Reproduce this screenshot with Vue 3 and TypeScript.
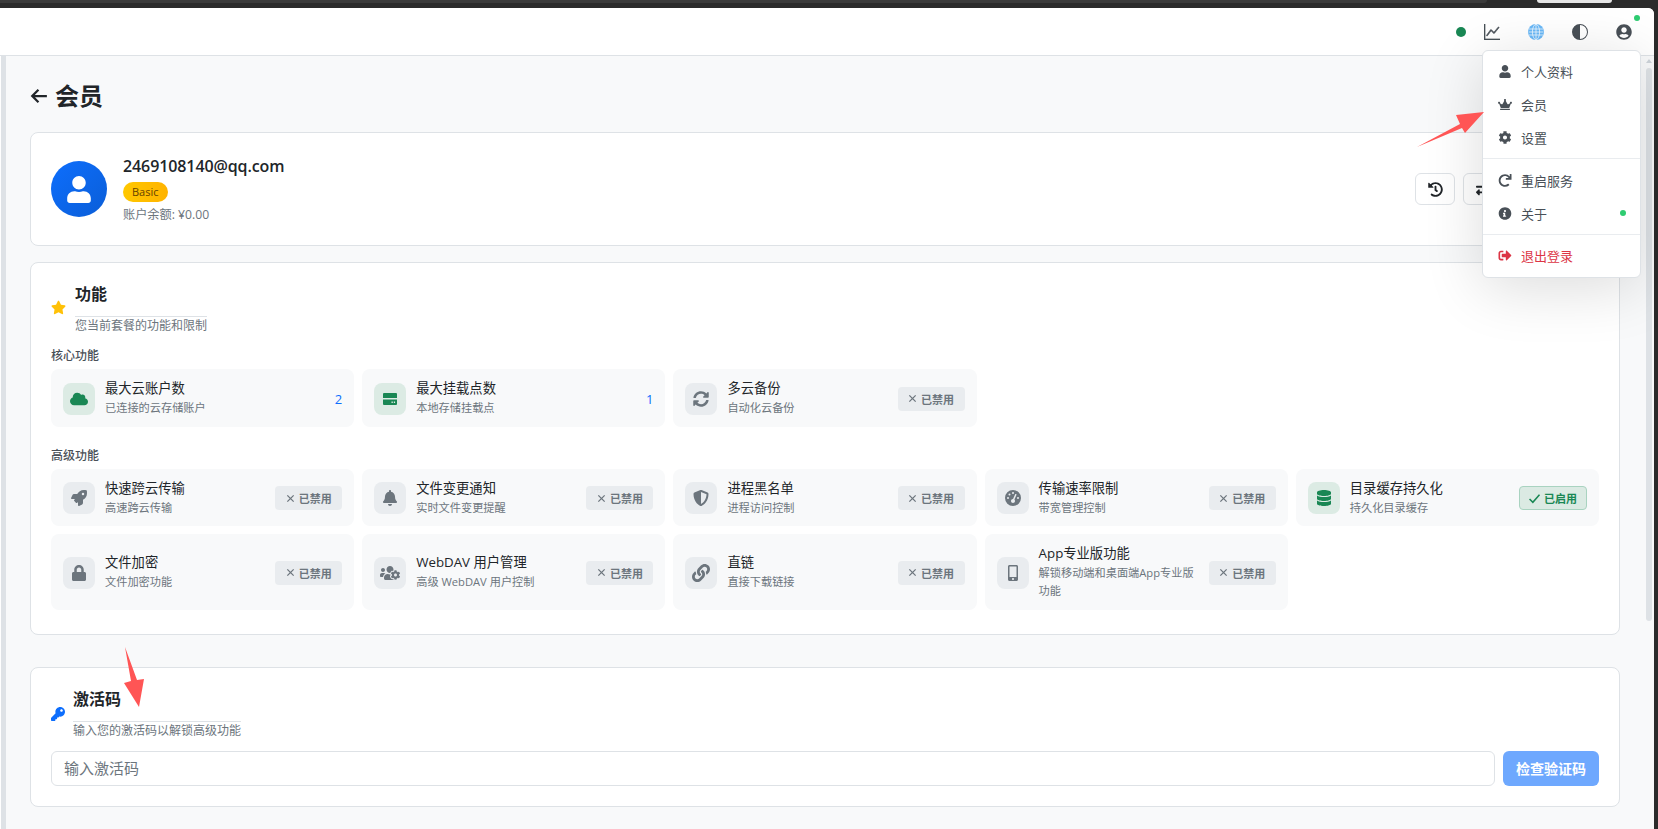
<template>
  <div class="screen">
    <div class="tab-strip">
      <div class="tab-rest"></div>
      <div class="tab-pill"></div>
    </div>

    <div class="window">
      <header class="topbar">
        <span class="status-dot"></span>
        <button class="top-btn">
          <svg :viewBox="icons.chart.vb" class="top-icon chart"><path :d="icons.chart.d" /></svg>
        </button>
        <button class="top-btn">
          <svg viewBox="0 0 16 16" class="top-icon">
            <circle cx="8" cy="8" r="8" fill="#69b8f7" />
            <g fill="none" stroke="#fff" stroke-width="0.7">
              <ellipse cx="8" cy="8" rx="3.6" ry="7.6" />
              <path d="M8 0v16M0.6 5h14.8M0.6 8h14.8M0.6 11h14.8" />
            </g>
          </svg>
        </button>
        <button class="top-btn">
          <svg :viewBox="icons.contrast.vb" class="top-icon"><path :d="icons.contrast.d" /></svg>
        </button>
        <button class="top-btn">
          <svg :viewBox="icons.userCircle.vb" class="top-icon"><path :d="icons.userCircle.d" /></svg>
          <span class="user-dot"></span>
        </button>
      </header>

      <div class="body">
        <div class="rail"></div>
        <main class="content">
          <h1 class="page-title">
            <svg viewBox="0 0 16 16" class="back-icon">
              <path d="M15 8H2M7.5 2.5 2 8l5.5 5.5" fill="none" stroke="currentColor" stroke-width="2" />
            </svg>
            会员
          </h1>

          <section class="card profile">
            <div class="avatar">
              <svg :viewBox="icons.user.vb" class="avatar-icon"><path :d="icons.user.d" /></svg>
            </div>
            <div class="profile-info">
              <div class="email">2469108140@qq.com</div>
              <span class="plan">Basic</span>
              <div class="balance">账户余额: ¥0.00</div>
            </div>
            <!-- the rest of this row sits under the open menu -->
            <div class="profile-actions">
              <button class="outline-btn">
                <svg :viewBox="icons.history.vb" class="outline-icon"><path :d="icons.history.d" /></svg>
              </button>
              <button class="outline-btn">
                <svg :viewBox="icons.exchange.vb" class="outline-icon"><path :d="icons.exchange.d" /></svg>
              </button>
            </div>
          </section>

          <section class="card features">
            <div class="card-head">
              <svg :viewBox="icons.star.vb" class="head-icon star"><path :d="icons.star.d" /></svg>
              <div>
                <h2 class="head-title">功能</h2>
                <div class="head-sub">您当前套餐的功能和限制</div>
              </div>
            </div>

            <div class="group-label">核心功能</div>
            <div class="feature-grid">
              <div v-for="item in coreFeatures" :key="item.title" class="feature">
                <div class="tile" :class="{ on: item.on }">
                  <svg :viewBox="icons[item.icon].vb" class="tile-icon" :class="item.icon"><path :d="icons[item.icon].d" /></svg>
                </div>
                <div class="feature-text">
                  <div class="feature-title">{{ item.title }}</div>
                  <div class="feature-desc">{{ item.desc }}</div>
                </div>
                <span v-if="item.value" class="feature-value">{{ item.value }}</span>
                <span v-else class="state">
                  <svg viewBox="0 0 10 10" class="state-mark"><path d="M1.5 1.5l7 7M8.5 1.5l-7 7" /></svg>已禁用
                </span>
              </div>
            </div>

            <div class="group-label second">高级功能</div>
            <div class="feature-grid">
              <div v-for="item in advancedFeatures" :key="item.title" class="feature">
                <div class="tile" :class="{ on: item.on }">
                  <svg :viewBox="icons[item.icon].vb" class="tile-icon" :class="item.icon"><path :d="icons[item.icon].d" /></svg>
                </div>
                <div class="feature-text">
                  <div class="feature-title">{{ item.title }}</div>
                  <div class="feature-desc">{{ item.desc }}</div>
                </div>
                <span v-if="item.on" class="state enabled">
                  <svg viewBox="0 0 10 10" class="state-mark check"><path d="M0.5 5.5l3 3 6-7" /></svg>已启用
                </span>
                <span v-else class="state">
                  <svg viewBox="0 0 10 10" class="state-mark"><path d="M1.5 1.5l7 7M8.5 1.5l-7 7" /></svg>已禁用
                </span>
              </div>
            </div>
          </section>

          <section class="card activation">
            <div class="card-head key-head">
              <svg :viewBox="icons.key.vb" class="head-icon key"><path :d="icons.key.d" /></svg>
              <div>
                <h2 class="head-title">激活码</h2>
                <div class="head-sub">输入您的激活码以解锁高级功能</div>
              </div>
            </div>
            <div class="code-row">
              <input class="code-input" type="text" placeholder="输入激活码" />
              <button class="code-btn">检查验证码</button>
            </div>
          </section>
        </main>
        <div class="scrollbar">
          <span class="scroll-arrow"></span>
          <span class="scroll-thumb"></span>
        </div>
      </div>
    </div>

    <nav class="menu">
      <template v-for="(group, index) in menuGroups" :key="index">
        <div v-if="index > 0" class="menu-divider"></div>
        <div
          v-for="row in group"
          :key="row.label"
          class="menu-row"
          :class="{ danger: row.danger }"
        >
          <svg :viewBox="icons[row.icon].vb" class="menu-icon"><path :d="icons[row.icon].d" /></svg>
          <span>{{ row.label }}</span>
          <span v-if="row.dot" class="menu-dot"></span>
        </div>
      </template>
    </nav>

    <!-- red arrows someone drew on top of the screenshot -->
    <svg class="marks" viewBox="0 0 1658 829">
      <polygon points="1417,147 1460,124 1456,115 1484,112 1465,133 1462,128" />
      <polygon points="125,647 131,681 124,683 139,707 144,679 137,680" />
    </svg>
  </div>
</template>

<script setup lang="ts">
interface Icon {
  vb: string
  d: string
}

const icons = {
  chart: { vb: '0 0 16 16', d: 'M0 0h1v15h15v1H0V0Zm14.817 3.113a.5.5 0 0 1 .07.704l-4.5 5.5a.5.5 0 0 1-.74.037L7.06 6.767l-3.656 5.027a.5.5 0 0 1-.808-.588l4-5.5a.5.5 0 0 1 .758-.06l2.609 2.61 4.15-5.073a.5.5 0 0 1 .704-.07Z' },
  contrast: { vb: '0 0 16 16', d: 'M8 0a8 8 0 1 0 0 16A8 8 0 0 0 8 0Zm0 1a7 7 0 0 1 0 14A7 7 0 0 1 8 1ZM8 1a7 7 0 0 0 0 14Z' },
  userCircle: { vb: '0 0 496 512', d: 'M248 8C111 8 0 119 0 256s111 248 248 248 248-111 248-248S385 8 248 8zm0 96c48.6 0 88 39.4 88 88s-39.4 88-88 88-88-39.4-88-88 39.4-88 88-88zm0 344c-58.7 0-111.3-26.6-146.5-68.2 18.8-35.4 55.6-59.8 98.5-59.8 2.4 0 4.8.4 7.1 1.1 13 4.2 26.6 6.9 40.9 6.9 14.3 0 28-2.7 40.9-6.9 2.3-.7 4.7-1.1 7.1-1.1 42.9 0 79.7 24.4 98.5 59.8C359.3 421.4 306.7 448 248 448z' },
  user: { vb: '0 0 448 512', d: 'M224 256c70.7 0 128-57.3 128-128S294.7 0 224 0 96 57.3 96 128s57.3 128 128 128zm89.6 32h-16.7c-22.2 10.2-46.9 16-72.9 16s-50.6-5.8-72.9-16h-16.7C60.2 288 0 348.2 0 422.4V464c0 26.5 21.5 48 48 48h352c26.5 0 48-21.5 48-48v-41.6c0-74.2-60.2-134.4-134.4-134.4z' },
  history: { vb: '0 0 512 512', d: 'M504 255.531c.253 136.64-111.18 248.372-247.82 248.468-59.015.042-113.223-20.53-155.822-54.911-11.077-8.94-11.905-25.541-1.839-35.607l11.267-11.267c8.609-8.609 22.353-9.551 31.891-1.984C173.062 425.135 212.781 440 256 440c101.705 0 184-82.311 184-184 0-101.705-82.311-184-184-184-48.814 0-93.149 18.969-126.068 49.932l50.754 50.754c10.08 10.08 2.941 27.314-11.313 27.314H24c-8.837 0-16-7.163-16-16V38.627c0-14.254 17.234-21.393 27.314-11.314l49.372 49.372C129.209 34.136 189.552 8 256 8c136.81 0 247.747 110.78 248 247.531zm-180.912 78.784l9.823-12.63c8.138-10.463 6.253-25.542-4.21-33.679L288 256.349V152c0-13.255-10.745-24-24-24h-16c-13.255 0-24 10.745-24 24v135.651l65.409 50.874c10.463 8.137 25.541 6.253 33.679-4.21z' },
  exchange: { vb: '0 0 512 512', d: 'M0 168v-16c0-13.255 10.745-24 24-24h360V80c0-21.367 25.899-32.042 40.971-16.971l80 80c9.372 9.373 9.372 24.569 0 33.941l-80 80C409.956 271.982 384 261.456 384 240v-48H24c-13.255 0-24-10.745-24-24zm488 152H128v-48c0-21.314-25.862-32.08-40.971-16.971l-80 80c-9.372 9.373-9.372 24.569 0 33.941l80 80C102.057 463.997 128 453.437 128 432v-48h360c13.255 0 24-10.745 24-24v-16c0-13.255-10.745-24-24-24z' },
  star: { vb: '0 0 576 512', d: 'M259.3 17.8L194 150.2 47.9 171.5c-26.2 3.8-36.7 36.1-17.7 54.6l105.7 103-25 145.5c-4.5 26.3 23.2 46 46.4 33.7L288 439.6l130.7 68.7c23.2 12.2 50.9-7.4 46.4-33.7l-25-145.5 105.7-103c19-18.5 8.5-50.8-17.7-54.6L382 150.2 316.7 17.8c-11.7-23.6-45.6-23.9-57.4 0z' },
  key: { vb: '0 0 512 512', d: 'M512 176.001C512 273.203 433.202 352 336 352c-11.22 0-22.19-1.062-32.827-3.069l-24.012 27.014A23.999 23.999 0 0 1 261.223 384H224v40c0 13.255-10.745 24-24 24h-40v40c0 13.255-10.745 24-24 24H24c-13.255 0-24-10.745-24-24v-78.059c0-6.365 2.529-12.47 7.029-16.971l161.802-161.802C163.108 213.814 160 195.271 160 176 160 78.798 238.797.001 335.999 0 433.488-.001 512 78.511 512 176.001zM336 128c0 26.51 21.49 48 48 48s48-21.49 48-48-21.49-48-48-48-48 21.49-48 48z' },
  cloud: { vb: '0 0 640 512', d: 'M537.6 226.6c4.1-10.7 6.4-22.4 6.4-34.6 0-53-43-96-96-96-19.7 0-38.1 6-53.3 16.2C367 64.2 315.3 32 256 32c-88.4 0-160 71.6-160 160 0 2.7.1 5.4.2 8.1C40.2 219.8 0 273.2 0 336c0 79.5 64.5 144 144 144h368c70.7 0 128-57.3 128-128 0-61.9-44-113.6-102.4-125.4z' },
  hdd: { vb: '0 0 16 16', d: 'M2 2h12a1 1 0 0 1 1 1v4H1V3a1 1 0 0 1 1-1ZM1 8.5h14V13a1 1 0 0 1-1 1H2a1 1 0 0 1-1-1ZM9.5 10.5v1.4h1.3v-1.4ZM11.8 10.5v1.4h1.3v-1.4Z' },
  sync: { vb: '0 0 512 512', d: 'M370.72 133.28C339.458 104.008 298.888 87.962 255.848 88c-77.458.068-144.328 53.178-162.791 126.85-1.344 5.363-6.122 9.15-11.651 9.15H24.103c-7.498 0-13.194-6.807-11.807-14.176C33.933 94.924 134.813 8 256 8c66.448 0 126.791 26.136 171.315 68.685L463.03 40.97C478.149 25.851 504 36.559 504 57.941V192c0 13.255-10.745 24-24 24H345.941c-21.382 0-32.09-25.851-16.971-40.971l41.75-41.749zM32 296h134.059c21.382 0 32.09 25.851 16.971 40.971l-41.75 41.75c31.262 29.273 71.835 45.319 114.876 45.28 77.418-.07 144.315-53.144 162.787-126.849 1.344-5.363 6.122-9.15 11.651-9.15h57.304c7.498 0 13.194 6.807 11.807 14.176C478.067 417.076 377.187 504 256 504c-66.448 0-126.791-26.136-171.315-68.685L48.97 471.03C33.851 486.149 8 475.441 8 454.059V320c0-13.255 10.745-24 24-24z' },
  rocket: { vb: '0 0 512 512', d: 'M505.12 19.09c-1.19-5.53-6.66-11-12.21-12.19C460.72 0 435.51 0 410.41 0 307.18 0 245.27 55.2 199.05 128H94.84c-16.35.02-35.56 11.88-42.89 26.48L2.52 253.3A28.4 28.4 0 0 0 0 264a24 24 0 0 0 24 24h103.82l-22.48 22.47c-11.36 11.36-13 32.26 0 45.25l50.91 50.91c11.16 11.19 32.16 13.16 45.28 0l22.47-22.47V488a24 24 0 0 0 24 24 28.56 28.56 0 0 0 10.71-2.52l98.73-49.39c14.63-7.3 26.51-26.5 26.51-42.86V312.8c72.6-46.31 128.03-108.41 128.03-211.1 0-25.2 0-50.4-6.95-82.61ZM384.04 168a40 40 0 1 1 40.01-40 40.02 40.02 0 0 1-40.01 40Z' },
  bell: { vb: '0 0 448 512', d: 'M224 512c35.32 0 63.97-28.65 63.97-64H160.03c0 35.35 28.65 64 63.97 64zm215.39-149.71c-19.32-20.76-55.47-51.99-55.47-154.29 0-77.7-54.48-139.9-127.94-155.16V32c0-17.67-14.32-32-31.98-32s-31.98 14.33-31.98 32v20.84C118.56 68.1 64.08 130.3 64.08 208c0 102.3-36.15 133.53-55.47 154.29-6 6.45-8.66 14.16-8.61 21.71.11 16.4 12.98 32 32.1 32h383.8c19.12 0 32-15.6 32.1-32 .05-7.55-2.61-15.27-8.61-21.71z' },
  shield: { vb: '0 0 512 512', d: 'M466.5 83.7l-192-80a48.15 48.15 0 0 0-36.9 0l-192 80C27.7 91.1 16 108.6 16 128c0 198.5 114.5 335.7 221.5 380.3 11.8 4.9 25.1 4.9 36.9 0C360.1 472.6 496 349.3 496 128c0-19.4-11.7-36.9-29.5-44.3zM256.1 446.3l-.1-381 175.9 73.3c-3.3 151.4-82.1 261.1-175.8 307.7z' },
  gauge: { vb: '0 0 512 512', d: 'M0 256a256 256 0 1 1 512 0A256 256 0 1 1 0 256zM288 96a32 32 0 1 0 -64 0 32 32 0 1 0 64 0zM256 416c35.3 0 64-28.7 64-64c0-17.4-6.9-33.1-18.1-44.6L366 161.7c5.3-12.1-.2-26.3-12.3-31.6s-26.3 .2-31.6 12.3L257.9 288c-.6 0-1.3 0-1.9 0c-35.3 0-64 28.7-64 64s28.7 64 64 64zM176 144a32 32 0 1 0 -64 0 32 32 0 1 0 64 0zM96 288a32 32 0 1 0 0-64 32 32 0 1 0 0 64zm352-32a32 32 0 1 0 -64 0 32 32 0 1 0 64 0z' },
  database: { vb: '0 0 448 512', d: 'M448 73.143v45.714C448 159.143 347.667 192 224 192S0 159.143 0 118.857V73.143C0 32.857 100.333 0 224 0s224 32.857 224 73.143zM448 176v102.857C448 319.143 347.667 352 224 352S0 319.143 0 278.857V176c48.125 33.143 136.208 48.572 224 48.572S399.874 209.143 448 176zm0 160v102.857C448 479.143 347.667 512 224 512S0 479.143 0 438.857V336c48.125 33.143 136.208 48.572 224 48.572S399.874 369.143 448 336z' },
  lock: { vb: '0 0 448 512', d: 'M400 224h-24v-72C376 68.2 307.8 0 224 0S72 68.2 72 152v72H48c-26.5 0-48 21.5-48 48v192c0 26.5 21.5 48 48 48h352c26.5 0 48-21.5 48-48V272c0-26.5-21.5-48-48-48zm-104 0H152v-72c0-39.7 32.3-72 72-72s72 32.3 72 72v72z' },
  usersCog: { vb: '0 0 640 512', d: 'M610.5 341.3c2.6-14.1 2.6-28.5 0-42.6l25.8-14.9c3-1.7 4.3-5.2 3.3-8.5-6.7-21.6-18.2-41.2-33.2-57.4-2.3-2.5-6-3.1-9-1.4l-25.8 14.9c-10.9-9.3-23.4-16.5-36.9-21.3v-29.8c0-3.4-2.4-6.4-5.7-7.1-22.3-5-45-4.8-66.2 0-3.3.7-5.7 3.7-5.7 7.1v29.8c-13.5 4.8-26 12-36.9 21.3l-25.8-14.9c-2.9-1.7-6.7-1.1-9 1.4-15 16.2-26.5 35.8-33.2 57.4-1 3.3.4 6.8 3.3 8.5l25.8 14.9c-2.6 14.1-2.6 28.5 0 42.6l-25.8 14.9c-3 1.7-4.3 5.2-3.3 8.5 6.7 21.6 18.2 41.1 33.2 57.4 2.3 2.5 6 3.1 9 1.4l25.8-14.9c10.9 9.3 23.4 16.5 36.9 21.3v29.8c0 3.4 2.4 6.4 5.7 7.1 22.3 5 45 4.8 66.2 0 3.3-.7 5.7-3.7 5.7-7.1v-29.8c13.5-4.8 26-12 36.9-21.3l25.8 14.9c2.9 1.7 6.7 1.1 9-1.4 15-16.2 26.5-35.8 33.2-57.4 1-3.3-.4-6.8-3.3-8.5l-25.8-14.9zM496 368.5c-26.8 0-48.5-21.8-48.5-48.5s21.8-48.5 48.5-48.5 48.5 21.8 48.5 48.5-21.7 48.5-48.5 48.5zM96 224c35.3 0 64-28.7 64-64s-28.7-64-64-64-64 28.7-64 64 28.7 64 64 64zm224 32c1.9 0 3.7-.5 5.6-.6 8.3-21.7 20.5-42.1 36.3-59.2 7.4-8 17.9-12.6 28.9-12.6 6.9 0 13.7 1.8 19.6 5.3l7.9 4.6c.8-.5 1.6-.9 2.4-1.4 7-14.6 11.2-30.8 11.2-48 0-61.9-50.1-112-112-112S208 82.1 208 144c0 61.9 50.1 112 112 112zm105.2 194.5c-2.3-1.2-4.6-2.6-6.8-3.9-8.2 4.8-15.3 9.8-27.5 9.8-10.9 0-21.4-4.6-28.9-12.6-18.3-19.8-32.3-43.9-40.2-69.6-10.7-34.5 24.9-49.7 25.8-50.3-.1-2.6-.1-5.2 0-7.8l-7.9-4.6c-3.8-2.2-7-5-9.8-8.1-3.3.2-6.5.6-9.8.6-24.6 0-47.6-6-68.5-16h-8.3C179.6 288 128 339.6 128 403.2V432c0 26.5 21.5 48 48 48h255.4c-3.7-6-6.2-12.8-6.2-20.3v-9.2zM173.1 274.6C161.5 263.1 145.6 256 128 256H64c-35.3 0-64 28.7-64 64v32c0 17.7 14.3 32 32 32h65.9c6.3-47.4 34.9-87.3 75.2-109.4z' },
  link: { vb: '0 0 512 512', d: 'M326.612 185.391c59.747 59.809 58.927 155.698.36 214.59-.11.12-.24.25-.36.37l-67.2 67.2c-59.27 59.27-155.699 59.262-214.96 0-59.27-59.26-59.27-155.7 0-214.96l37.106-37.106c9.84-9.84 26.786-3.3 27.294 10.606.648 17.722 3.826 35.527 9.69 52.721 1.986 5.822.567 12.262-3.783 16.612l-13.087 13.087c-28.026 28.026-28.905 73.66-1.155 101.96 28.024 28.579 74.086 28.749 102.325.51l67.2-67.19c28.191-28.191 28.073-73.757 0-101.83-3.701-3.694-7.429-6.564-10.341-8.569a16.037 16.037 0 0 1-6.947-12.606c-.396-10.567 3.348-21.456 11.698-29.806l21.054-21.055c5.521-5.521 14.182-6.199 20.584-1.731a152.482 152.482 0 0 1 20.522 17.197zM467.547 44.449c-59.261-59.262-155.69-59.27-214.96 0l-67.2 67.2c-.12.12-.25.25-.36.37-58.566 58.892-59.387 154.781.36 214.59a152.454 152.454 0 0 0 20.521 17.196c6.402 4.468 15.064 3.789 20.584-1.731l21.054-21.055c8.35-8.35 12.094-19.239 11.698-29.806a16.037 16.037 0 0 0-6.947-12.606c-2.912-2.005-6.64-4.875-10.341-8.569-28.073-28.073-28.191-73.639 0-101.83l67.2-67.19c28.239-28.239 74.3-28.069 102.325.51 27.75 28.3 26.872 73.934-1.155 101.96l-13.087 13.087c-4.35 4.35-5.769 10.79-3.783 16.612 5.864 17.194 9.042 34.999 9.69 52.721.509 13.906 17.454 20.446 27.294 10.606l37.106-37.106c59.271-59.259 59.271-155.699.001-214.959z' },
  mobile: { vb: '0 0 320 512', d: 'M272 0H48C21.5 0 0 21.5 0 48v416c0 26.5 21.5 48 48 48h224c26.5 0 48-21.5 48-48V48c0-26.5-21.5-48-48-48zM160 480c-17.7 0-32-14.3-32-32s14.3-32 32-32 32 14.3 32 32-14.3 32-32 32zm112-108c0 6.6-5.4 12-12 12H60c-6.6 0-12-5.4-12-12V60c0-6.6 5.4-12 12-12h200c6.6 0 12 5.4 12 12v312z' },
  crown: { vb: '0 0 640 512', d: 'M528 448H112c-8.8 0-16 7.2-16 16v32c0 8.8 7.2 16 16 16h416c8.8 0 16-7.2 16-16v-32c0-8.8-7.2-16-16-16zm64-320c-26.5 0-48 21.5-48 48 0 7.1 1.6 13.7 4.4 19.8L476 239.2c-15.4 9.2-35.3 4-44.2-11.6L350.3 85C361 76.2 368 63 368 48c0-26.5-21.5-48-48-48s-48 21.5-48 48c0 15 7 28.2 17.7 37l-81.5 142.6c-8.9 15.6-28.9 20.8-44.2 11.6l-72.3-43.4c2.7-6 4.4-12.7 4.4-19.8 0-26.5-21.5-48-48-48S0 149.5 0 176s21.5 48 48 48c2.6 0 5.2-.4 7.7-.8L128 416h384l72.3-192.8c2.5.4 5.1.8 7.7.8 26.5 0 48-21.5 48-48s-21.5-48-48-48z' },
  cog: { vb: '0 0 512 512', d: 'M487.4 315.7l-42.6-24.6c4.3-23.2 4.3-47 0-70.2l42.6-24.6c4.9-2.8 7.1-8.6 5.5-14-11.1-35.6-30-67.8-54.7-94.6-3.8-4.1-10-5.1-14.8-2.3L380.8 110c-17.9-15.4-38.5-27.3-60.8-35.1V25.8c0-5.6-3.9-10.5-9.4-11.7-36.7-8.2-74.3-7.8-109.2 0-5.5 1.2-9.4 6.1-9.4 11.7V75c-22.2 7.9-42.8 19.8-60.8 35.1L88.7 85.5c-4.9-2.8-11-1.9-14.8 2.3-24.7 26.7-43.6 58.9-54.7 94.6-1.7 5.4.6 11.2 5.5 14L67.3 221c-4.3 23.2-4.3 47 0 70.2l-42.6 24.6c-4.9 2.8-7.1 8.6-5.5 14 11.1 35.6 30 67.8 54.7 94.6 3.8 4.1 10 5.1 14.8 2.3l42.6-24.6c17.9 15.4 38.5 27.3 60.8 35.1v49.2c0 5.6 3.9 10.5 9.4 11.7 36.7 8.2 74.3 7.8 109.2 0 5.5-1.2 9.4-6.1 9.4-11.7v-49.2c22.2-7.9 42.8-19.8 60.8-35.1l42.6 24.6c4.9 2.8 11 1.9 14.8-2.3 24.7-26.7 43.6-58.9 54.7-94.6 1.5-5.5-.7-11.3-5.6-14.1zM256 336c-44.1 0-80-35.9-80-80s35.9-80 80-80 80 35.9 80 80-35.9 80-80 80z' },
  redo: { vb: '0 0 512 512', d: 'M500.33 0h-47.41a12 12 0 0 0-12 12.57l4 82.76A247.42 247.42 0 0 0 256 8C119.34 8 7.9 119.53 8 256.19 8.1 393.07 119.1 504 256 504a247.1 247.1 0 0 0 166.18-63.91 12 12 0 0 0 .48-17.43l-34-34a12 12 0 0 0-16.38-.55A176 176 0 1 1 402.1 157.8l-101.53-4.87a12 12 0 0 0-12.57 12v47.41a12 12 0 0 0 12 12h200.33a12 12 0 0 0 12-12V12a12 12 0 0 0-12-12z' },
  info: { vb: '0 0 512 512', d: 'M256 8C119.043 8 8 119.083 8 256c0 136.997 111.043 248 248 248s248-111.003 248-248C504 119.083 392.957 8 256 8zm0 110c23.196 0 42 18.804 42 42s-18.804 42-42 42-42-18.804-42-42 18.804-42 42-42zm56 254c0 6.627-5.373 12-12 12h-112c-6.627 0-12-5.373-12-12v-24c0-6.627 5.373-12 12-12h12v-64h-12c-6.627 0-12-5.373-12-12v-24c0-6.627 5.373-12 12-12h64c6.627 0 12 5.373 12 12v100h12c6.627 0 12 5.373 12 12v24z' },
  signOut: { vb: '0 0 512 512', d: 'M497 273L329 441c-15 15-41 4.5-41-17v-96H152c-13.3 0-24-10.7-24-24v-96c0-13.3 10.7-24 24-24h136V88c0-21.4 25.9-32 41-17l168 168c9.3 9.4 9.3 24.6 0 34zM192 436v-40c0-6.6-5.4-12-12-12H96c-17.7 0-32-14.3-32-32V160c0-17.7 14.3-32 32-32h84c6.6 0 12-5.4 12-12V76c0-6.6-5.4-12-12-12H96c-53 0-96 43-96 96v192c0 53 43 96 96 96h84c6.6 0 12-5.4 12-12z' }
} satisfies Record<string, Icon>

type IconName = keyof typeof icons

interface Feature {
  icon: IconName
  title: string
  desc: string
  on?: boolean
  value?: string
}

interface MenuRow {
  icon: IconName
  label: string
  dot?: boolean
  danger?: boolean
}

const coreFeatures: Feature[] = [
  { icon: 'cloud', title: '最大云账户数', desc: '已连接的云存储账户', on: true, value: '2' },
  { icon: 'hdd', title: '最大挂载点数', desc: '本地存储挂载点', on: true, value: '1' },
  { icon: 'sync', title: '多云备份', desc: '自动化云备份' }
]

const advancedFeatures: Feature[] = [
  { icon: 'rocket', title: '快速跨云传输', desc: '高速跨云传输' },
  { icon: 'bell', title: '文件变更通知', desc: '实时文件变更提醒' },
  { icon: 'shield', title: '进程黑名单', desc: '进程访问控制' },
  { icon: 'gauge', title: '传输速率限制', desc: '带宽管理控制' },
  { icon: 'database', title: '目录缓存持久化', desc: '持久化目录缓存', on: true },
  { icon: 'lock', title: '文件加密', desc: '文件加密功能' },
  { icon: 'usersCog', title: 'WebDAV 用户管理', desc: '高级 WebDAV 用户控制' },
  { icon: 'link', title: '直链', desc: '直接下载链接' },
  { icon: 'mobile', title: 'App专业版功能', desc: '解锁移动端和桌面端App专业版功能' }
]

const menuGroups: MenuRow[][] = [
  [
    { icon: 'user', label: '个人资料' },
    { icon: 'crown', label: '会员' },
    { icon: 'cog', label: '设置' }
  ],
  [
    { icon: 'redo', label: '重启服务' },
    { icon: 'info', label: '关于', dot: true }
  ],
  [{ icon: 'signOut', label: '退出登录', danger: true }]
]
</script>

<style>
html,
body {
  margin: 0;
  overflow: hidden;
}
</style>

<style scoped>
.screen {
  position: relative;
  width: 1658px;
  height: 829px;
  padding-right: 4px;
  box-sizing: border-box;
  overflow: hidden;
  background: #2b2b2b;
  font-family: "Open Sans", "Noto Sans CJK SC", sans-serif;
  color: #212529;
}

.tab-strip {
  display: flex;
  height: 8px;
}

.tab-rest {
  width: 1487px;
  height: 3px;
  background: #3b3b3b;
  border-bottom-right-radius: 6px;
}

.tab-pill {
  width: 75px;
  height: 3px;
  margin-left: 50px;
  background: #e6e6e6;
  border-radius: 0 0 8px 8px;
}

.window {
  display: flex;
  flex-direction: column;
  height: 821px;
  background: #fff;
  border-top-right-radius: 6px;
  overflow: hidden;
}

.topbar {
  display: flex;
  align-items: center;
  justify-content: flex-end;
  flex: none;
  height: 47px;
  padding-right: 8px;
  background: #fff;
  border-bottom: 1px solid #dee2e6;
  box-sizing: content-box;
}

.status-dot {
  width: 10px;
  height: 10px;
  margin-right: 4px;
  border-radius: 50%;
  background: #198754;
}

.top-btn {
  position: relative;
  display: flex;
  align-items: center;
  justify-content: center;
  width: 44px;
  height: 32px;
  padding: 0;
  border: none;
  background: none;
  color: #495057;
}

.top-icon {
  width: 16px;
  height: 16px;
  fill: currentColor;
}

.top-icon.chart {
  stroke: currentColor;
  stroke-width: 0.7;
}

.user-dot {
  position: absolute;
  top: -1px;
  right: 6px;
  width: 6px;
  height: 6px;
  border-radius: 50%;
  background: #2ecc71;
}

.body {
  display: flex;
  flex: 1;
  min-height: 0;
  background: #f8f9fa;
}

.rail {
  flex: none;
  width: 5px;
  border-left: 1px solid #fff;
  background: #dee2e6;
}

.content {
  flex: 1;
  min-width: 0;
  padding: 24px 23px 0 24px;
}

.page-title {
  display: flex;
  align-items: center;
  gap: 7px;
  height: 32px;
  margin: 0 0 20px;
  font-size: 24px;
  font-weight: 700;
  line-height: 32px;
}

.back-icon {
  width: 18px;
  height: 18px;
}

.card {
  background: #fff;
  border: 1px solid #dee2e6;
  border-radius: 8px;
}

.profile {
  display: flex;
  align-items: center;
  gap: 16px;
  padding: 21px 20px;
}

.avatar {
  display: flex;
  align-items: center;
  justify-content: center;
  flex: none;
  width: 56px;
  height: 56px;
  border-radius: 50%;
  background: linear-gradient(135deg, #0d6efd, #0b5ed7);
}

.avatar-icon {
  width: 24px;
  height: 27px;
  fill: #fff;
}

.profile-info {
  display: flex;
  flex-direction: column;
  align-items: flex-start;
  flex: 1;
}

.email {
  margin-bottom: 1px;
  font-size: 16px;
  font-weight: 600;
  letter-spacing: -0.1px;
  line-height: 25px;
}

.plan {
  height: 20px;
  margin-top: 2px;
  padding: 0 9px;
  border-radius: 10px;
  background: linear-gradient(90deg, #ffc800, #ffb300);
  color: #664300;
  font-size: 11px;
  line-height: 20px;
}

.balance {
  margin-top: 4px;
  color: #6c757d;
  font-size: 12.2px;
  line-height: 18px;
}

.profile-actions {
  display: flex;
  gap: 8px;
  margin-right: 96px;
}

.outline-btn {
  display: flex;
  align-items: center;
  justify-content: center;
  width: 40px;
  height: 32px;
  padding: 0;
  background: #fff;
  border: 1px solid #dee2e6;
  border-radius: 6px;
}

.outline-icon {
  width: 15px;
  height: 15px;
  fill: #212529;
}

.features {
  margin-top: 16px;
  padding: 21px 20px 24px;
}

.card-head {
  display: flex;
  align-items: center;
  gap: 10px;
  margin-bottom: 12px;
}

.key-head {
  gap: 8px;
  margin-bottom: 11px;
}

.head-icon {
  flex: none;
  width: 14px;
  height: 14px;
}

.star {
  width: 15px;
  height: 15px;
  margin-top: -4px;
  margin-right: -1px;
  fill: #ffc107;
}

.key {
  fill: #0d6efd;
}

.head-title {
  margin: 0 0 12px;
  padding: 0;
  border: none;
  font-size: 16px;
  font-weight: 700;
  line-height: 20px;
}

.key-head .head-title {
  margin-bottom: 11px;
  line-height: 22px;
}

.head-sub {
  border-top: 1px solid #dee2e6;
  color: #6c757d;
  font-size: 12px;
  line-height: 18px;
}

.group-label {
  margin-bottom: 4px;
  color: #495057;
  font-size: 12px;
  font-weight: 500;
  line-height: 18px;
}

.group-label.second {
  margin-top: 20px;
}

.feature-grid {
  display: grid;
  grid-template-columns: repeat(5, 1fr);
  gap: 8px;
}

.feature {
  display: flex;
  align-items: center;
  gap: 10px;
  min-width: 0;
  padding: 11px 12px 9.5px;
  background: #f8f9fa;
  border-radius: 8px;
}

.tile {
  display: flex;
  align-items: center;
  justify-content: center;
  flex: none;
  width: 32px;
  height: 32px;
  border-radius: 8px;
  background: #e9ecef;
  color: #6c757d;
}

.tile.on {
  background: #dcebe4;
  color: #198754;
}

.tile-icon {
  width: 16px;
  height: 16px;
  fill: currentColor;
}

.tile-icon.cloud,
.tile-icon.link {
  width: 18px;
  height: 18px;
}

.tile-icon.usersCog {
  width: 20px;
  height: 18px;
}

.feature-text {
  flex: 1;
  min-width: 0;
}

.feature-title {
  margin-bottom: 2px;
  font-size: 13.3px;
  font-weight: 400;
  line-height: 17px;
}

.feature-desc {
  color: #6c757d;
  font-size: 11.2px;
  line-height: 18px;
}

.feature-value {
  color: #0d6efd;
  font-size: 13px;
}

.state {
  display: flex;
  align-items: center;
  justify-content: center;
  flex: none;
  gap: 4px;
  box-sizing: border-box;
  width: 67px;
  height: 24px;
  background: #e9ecef;
  border-radius: 4px;
  color: #6c757d;
  font-size: 11px;
  font-weight: 600;
}

.state.enabled {
  width: 68px;
  background: #dbeae3;
  border: 1px solid #a9d3c0;
  color: #198754;
}

.state-mark {
  flex: none;
  width: 9px;
  height: 9px;
  fill: none;
  stroke: currentColor;
  stroke-width: 1.4;
}

.state-mark.check {
  width: 11px;
  height: 11px;
}

.activation {
  margin-top: 32px;
  padding: 20px;
}

.code-row {
  display: flex;
  gap: 8px;
}

.code-input {
  flex: 1;
  min-width: 0;
  box-sizing: border-box;
  height: 35px;
  padding: 0 12px;
  background: #fff;
  border: 1px solid #dee2e6;
  border-radius: 6px;
  color: #212529;
  font-family: inherit;
  font-size: 15px;
  outline: none;
}

.code-input::placeholder {
  color: #6c757d;
  opacity: 1;
}

.code-btn {
  flex: none;
  width: 96px;
  height: 35px;
  padding: 0;
  background: #6ea8fe;
  border: none;
  border-radius: 6px;
  color: #fff;
  font-family: inherit;
  font-size: 14px;
  font-weight: 600;
}

.scrollbar {
  position: relative;
  flex: none;
  display: flex;
  flex-direction: column;
  align-items: center;
  box-sizing: border-box;
  width: 11px;
  padding: 3px 2px 0 3px;
}

.scroll-arrow {
  flex: none;
  width: 0;
  height: 0;
  border-left: 3px solid transparent;
  border-right: 3px solid transparent;
  border-bottom: 4px solid #ced4da;
}

.scroll-thumb {
  flex: none;
  width: 6px;
  height: 553px;
  margin-top: 5px;
  background: #dee2e6;
  border-radius: 3px;
}

.menu {
  position: absolute;
  top: 50px;
  left: 1482px;
  width: 159px;
  box-sizing: border-box;
  padding: 3.5px 0 4.5px;
  background: #fff;
  border: 1px solid #dee2e6;
  border-radius: 6px;
  box-shadow: 0 10px 60px rgba(0, 0, 0, 0.14);
  color: #495057;
}

.menu-row {
  display: flex;
  align-items: center;
  gap: 9px;
  height: 33.3px;
  padding: 0 14px 0 15px;
  font-size: 13px;
}

.menu-row.danger {
  color: #dc3545;
}

.menu-icon {
  flex: none;
  width: 14px;
  height: 13px;
  fill: currentColor;
}

.menu-dot {
  width: 6px;
  height: 6px;
  margin-left: auto;
  border-radius: 50%;
  background: #2ecc71;
}

.menu-divider {
  height: 1px;
  margin: 4px 0;
  background: #e9ecef;
}

.marks {
  position: absolute;
  top: 0;
  left: 0;
  width: 1658px;
  height: 829px;
  fill: #ff5555;
  pointer-events: none;
}
</style>
